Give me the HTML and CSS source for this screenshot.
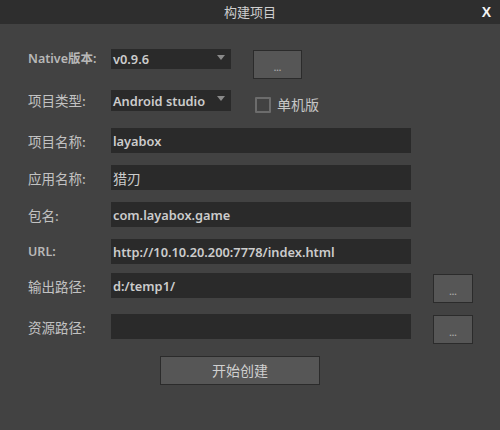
FILE: index.html
```html
<!DOCTYPE html>
<html lang="zh">
<head>
<meta charset="utf-8">
<link rel="stylesheet" href="styles.css">
</head>
<body>
<div class="dialog">
  <div class="titlebar">
    <span class="title">构建项目</span>
    <span class="close">X</span>
  </div>
  <div class="form">
    <div class="row row-native">
      <span class="label label-latin">Native版本:</span>
      <div class="select"><span class="val">v0.9.6</span><span class="arrow"></span></div>
      <button class="btn btn-dots btn-native">...</button>
    </div>
    <div class="row row-type">
      <span class="label">项目类型:</span>
      <div class="select select-type"><span class="val">Android studio</span><span class="arrow"></span></div>
      <label class="check"><span class="box"></span><span class="check-text">单机版</span></label>
    </div>
    <div class="row row-input row-first">
      <span class="label">项目名称:</span>
      <div class="input"><span class="val">layabox</span></div>
    </div>
    <div class="row row-input">
      <span class="label">应用名称:</span>
      <div class="input"><span class="val val-cjk">猎刃</span></div>
    </div>
    <div class="row row-input">
      <span class="label">包名:</span>
      <div class="input"><span class="val">com.layabox.game</span></div>
    </div>
    <div class="row row-input">
      <span class="label label-latin">URL:</span>
      <div class="input"><span class="val">http://10.10.20.200:7778/index.html</span></div>
    </div>
    <div class="row row-input row-out">
      <span class="label">输出路径:</span>
      <div class="input"><span class="val">d:/temp1/</span></div>
      <button class="btn btn-dots btn-side">...</button>
    </div>
    <div class="row row-input row-res">
      <span class="label">资源路径:</span>
      <div class="input"></div>
      <button class="btn btn-dots btn-side">...</button>
    </div>
    <div class="actions">
      <button class="btn btn-start">开始创建</button>
    </div>
  </div>
</div>
</body>
</html>
```
FILE: styles.css
```css
* { box-sizing: border-box; }
html, body {
  margin: 0;
  padding: 0;
  width: 500px;
  height: 430px;
  background: #424242;
  overflow: hidden;
}
body {
  font-family: "Noto Sans CJK SC", "Noto Sans", sans-serif;
  color: #c8c8c8;
}
.dialog {
  width: 500px;
  height: 430px;
  background: #424242;
}
.titlebar {
  height: 24px;
  background: #2e2e2e;
  position: relative;
  display: flex;
  justify-content: center;
  align-items: center;
}
.title {
  font-size: 13px;
  color: #cfcfcf;
  line-height: 24px;
}
.close {
  position: absolute;
  right: 9px;
  top: 0;
  line-height: 24px;
  font-family: "Liberation Sans", sans-serif;
  font-weight: bold;
  font-size: 14px;
  color: #f4f4f4;
}
.form {
  padding-left: 28px;
  display: flex;
  flex-direction: column;
}
.row {
  display: flex;
  align-items: flex-start;
}
.label {
  width: 83px;
  flex: none;
  font-size: 13.5px;
  line-height: 20px;
  color: #c2c2c2;
  white-space: nowrap;
}
.label-latin {
  font-family: "Noto Sans", "Noto Sans CJK SC", sans-serif;
  font-weight: 600;
  font-size: 12.5px;
  color: #b8b8b8;
}
.val {
  font-family: "Noto Sans", "Noto Sans CJK SC", sans-serif;
  font-weight: 600;
  font-size: 12.8px;
  color: #cccccc;
  white-space: nowrap;
}
.val-cjk {
  font-family: "Noto Sans CJK SC", sans-serif;
  font-weight: 400;
  font-size: 14px;
}
.row-native { margin-top: 25px; height: 30px; }
.row-type { margin-top: 11px; height: 21px; }
.select {
  width: 120px;
  height: 20px;
  background: #2a2a2a;
  position: relative;
  padding-left: 2px;
  line-height: 20px;
  display: flex;
  align-items: center;
}
.select-type { height: 21px; }
.arrow {
  position: absolute;
  right: 6px;
  top: 6px;
  width: 0;
  height: 0;
  border-left: 4.5px solid transparent;
  border-right: 4.5px solid transparent;
  border-top: 5px solid #8a8a8a;
}
.btn {
  font-family: "Noto Sans CJK SC", sans-serif;
  background: #565656;
  border: 1px solid #2b2b2b;
  color: #cfcfcf;
  padding: 0;
  margin: 0;
}
.btn-dots {
  width: 49px;
  height: 29px;
  font-family: "Liberation Sans", sans-serif;
  font-size: 9px;
  font-weight: bold;
  color: #a8a8a8;
  line-height: 1;
  padding-top: 7px;
}
.btn-native { margin-left: 22px; margin-top: 1px; }
.check {
  display: flex;
  align-items: center;
  margin-left: 24px;
  margin-top: 5px;
}
.box {
  width: 16px;
  height: 16px;
  border: 2px solid #6c6c6c;
  border-radius: 1px;
  margin-top: 2px;
}
.check-text {
  margin-left: 6px;
  font-size: 14px;
  color: #c6c6c6;
  line-height: 18px;
}
.row-input { margin-top: 12px; height: 25px; align-items: center; }
.row-first { margin-top: 17px; }
.row-out { margin-top: 9px; }
.row-res { margin-top: 16px; }
.input {
  width: 300px;
  height: 25px;
  background: #2a2a2a;
  padding-left: 2px;
  display: flex;
  align-items: center;
}
.btn-side {
  width: 40px;
  height: 29px;
  margin-left: 22px;
  align-self: flex-start;
  margin-top: 1px;
}
.actions {
  margin-top: 17px;
  padding-left: 132px;
}
.btn-start {
  width: 160px;
  height: 29px;
  font-size: 14px;
  color: #d0d0d0;
  line-height: 27px;
}
```
